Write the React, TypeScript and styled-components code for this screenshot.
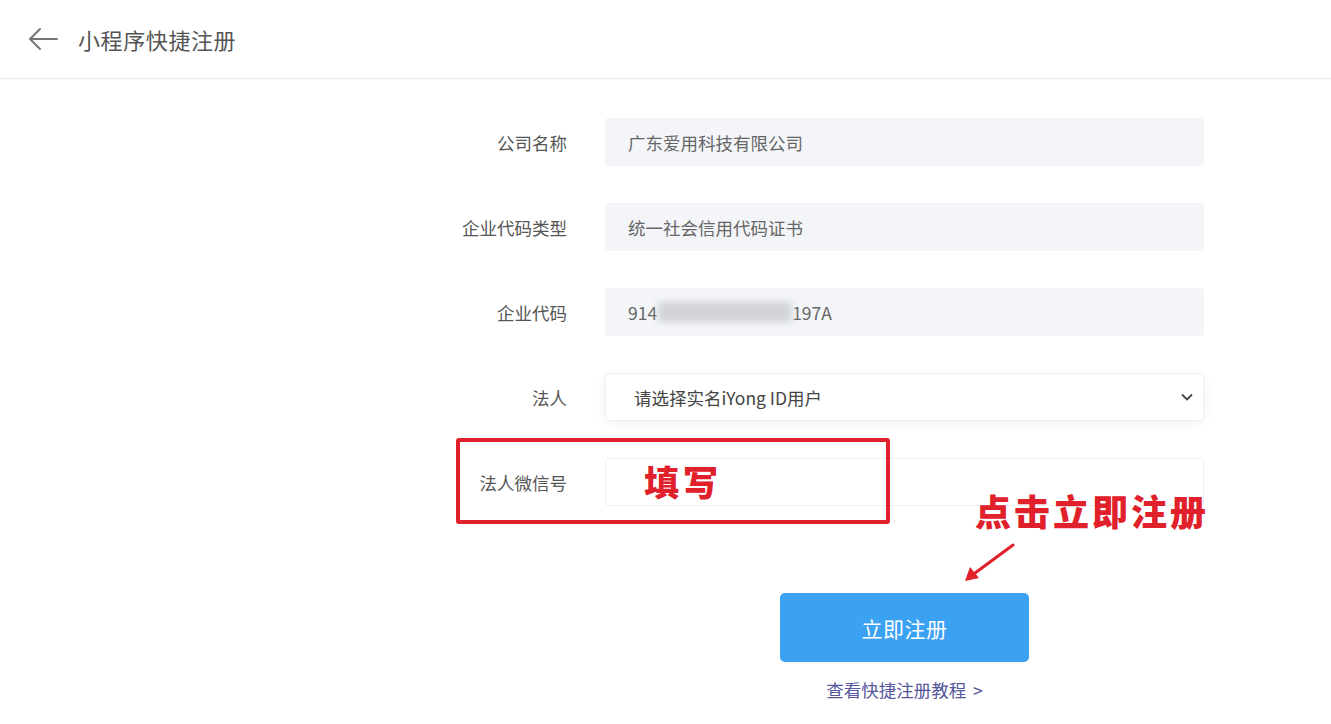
import React from "react";
import styled, { createGlobalStyle } from "styled-components";

const Global = createGlobalStyle`
  html, body { margin: 0; padding: 0; background: #fff; }
  body { font-family: "Noto Sans CJK SC", "Noto Sans", sans-serif; }
`;

const Page = styled.div`
  width: 1331px;
  min-height: 724px;
  background: #fff;
`;

const Header = styled.header`
  height: 79px;
  border-bottom: 1px solid #ececec;
  display: flex;
  align-items: center;
  padding-left: 27px;
  gap: 19px;
  box-sizing: border-box;
`;

const Title = styled.h1`
  margin: 0;
  font-size: 22px;
  font-weight: 400;
  color: #555;
  letter-spacing: 0.6px;
`;

const Form = styled.div`
  margin-left: 440px;
  margin-top: 39px;
  width: 764px;
  display: flex;
  flex-direction: column;
  gap: 37px;
`;

const Row = styled.div`
  position: relative;
  display: grid;
  grid-template-columns: 127px 599px;
  column-gap: 38px;
  align-items: center;
`;

const Label = styled.label`
  text-align: right;
  font-size: 17.5px;
  color: #555;
`;

const Field = styled.div<{ $variant?: "filled" | "select" | "empty" }>`
  position: relative;
  height: 48px;
  box-sizing: border-box;
  border-radius: 4px;
  display: flex;
  align-items: center;
  padding-left: ${(p) => (p.$variant === "select" ? "28px" : "23px")};
  font-size: 17.5px;
  color: ${(p) => (p.$variant === "select" ? "#444" : "#666")};
  background: ${(p) => (p.$variant === "filled" ? "#f3f5f8" : "#fff")};
  border: ${(p) =>
    p.$variant === "filled" ? "none" : "1px solid #eceef2"};
  box-shadow: ${(p) =>
    p.$variant === "select" ? "0 2px 12px rgba(30,40,80,0.06)" : "none"};
`;

const Blur = styled.span`
  display: inline-block;
  width: 134px;
  height: 20px;
  background: #d2d4d8;
  filter: blur(3px);
  margin: 0 0 0 1px;
`;

const Chevron = styled.svg`
  position: absolute;
  right: 10px;
  top: 50%;
  transform: translateY(-50%);
`;

const RedBox = styled.div`
  position: absolute;
  left: 16px;
  top: -20px;
  width: 434px;
  height: 86px;
  box-sizing: border-box;
  border: 4px solid #e0202a;
  border-radius: 3px;
  pointer-events: none;
`;

const Annot = styled.span<{ $size: number; $spacing?: number }>`
  position: absolute;
  color: #e0202a;
  font-weight: 900;
  font-size: ${(p) => p.$size}px;
  letter-spacing: ${(p) => p.$spacing ?? 0}px;
  white-space: nowrap;
  line-height: 1;
`;

const Arrow = styled.svg`
  position: absolute;
  left: 523px;
  top: 85px;
`;

const Actions = styled.div`
  margin-left: 440px;
  width: 764px;
  display: grid;
  grid-template-columns: 127px 599px;
  column-gap: 38px;
  margin-top: 87px;
`;

const ActionCol = styled.div`
  grid-column: 2;
  display: flex;
  flex-direction: column;
  align-items: center;
`;

const SubmitButton = styled.button`
  width: 249px;
  height: 69px;
  border: none;
  border-radius: 5px;
  background: #3ba1f2;
  color: #fff;
  font-size: 21px;
  font-family: inherit;
  letter-spacing: 0.5px;
  cursor: pointer;
`;

const Link = styled.a`
  margin-top: 15px;
  font-size: 17.5px;
  color: #56569c;
  text-decoration: none;
  word-spacing: 3px;
`;

export default function App() {
  return (
    <Page>
      <Global />
      <Header>
        <svg width="32" height="24" viewBox="0 0 32 24" fill="none">
          <path
            d="M30 12H3M13 2L3 12l10 10"
            stroke="#777"
            strokeWidth="2"
            strokeLinecap="round"
            strokeLinejoin="round"
          />
        </svg>
        <Title>小程序快捷注册</Title>
      </Header>

      <Form>
        <Row>
          <Label>公司名称</Label>
          <Field $variant="filled">广东爱用科技有限公司</Field>
        </Row>
        <Row>
          <Label>企业代码类型</Label>
          <Field $variant="filled">统一社会信用代码证书</Field>
        </Row>
        <Row>
          <Label>企业代码</Label>
          <Field $variant="filled">
            914<Blur />197A
          </Field>
        </Row>
        <Row>
          <Label>法人</Label>
          <Field $variant="select">
            请选择实名iYong ID用户
            <Chevron width="12" height="8" viewBox="0 0 12 8">
              <path d="M1 1.5l5 5 5-5" stroke="#444" strokeWidth="1.8" fill="none" />
            </Chevron>
          </Field>
        </Row>
        <Row>
          <Label>法人微信号</Label>
          <Field $variant="empty">
            <Annot $size={35} $spacing={4} style={{ left: 38, top: 4 }}>
              填写
            </Annot>
          </Field>
          <RedBox />
          <Annot $size={36} $spacing={3} style={{ left: 535, top: 34 }}>
            点击立即注册
          </Annot>
          <Arrow width="52" height="40" viewBox="0 0 52 40">
            <path d="M50 2L8 33" stroke="#e0202a" strokeWidth="3" strokeLinecap="round" />
            <path d="M2 38l5-14 9 11z" fill="#e0202a" />
          </Arrow>
        </Row>
      </Form>

      <Actions>
        <ActionCol>
          <SubmitButton>立即注册</SubmitButton>
          <Link href="#">查看快捷注册教程 &gt;</Link>
        </ActionCol>
      </Actions>
    </Page>
  );
}
